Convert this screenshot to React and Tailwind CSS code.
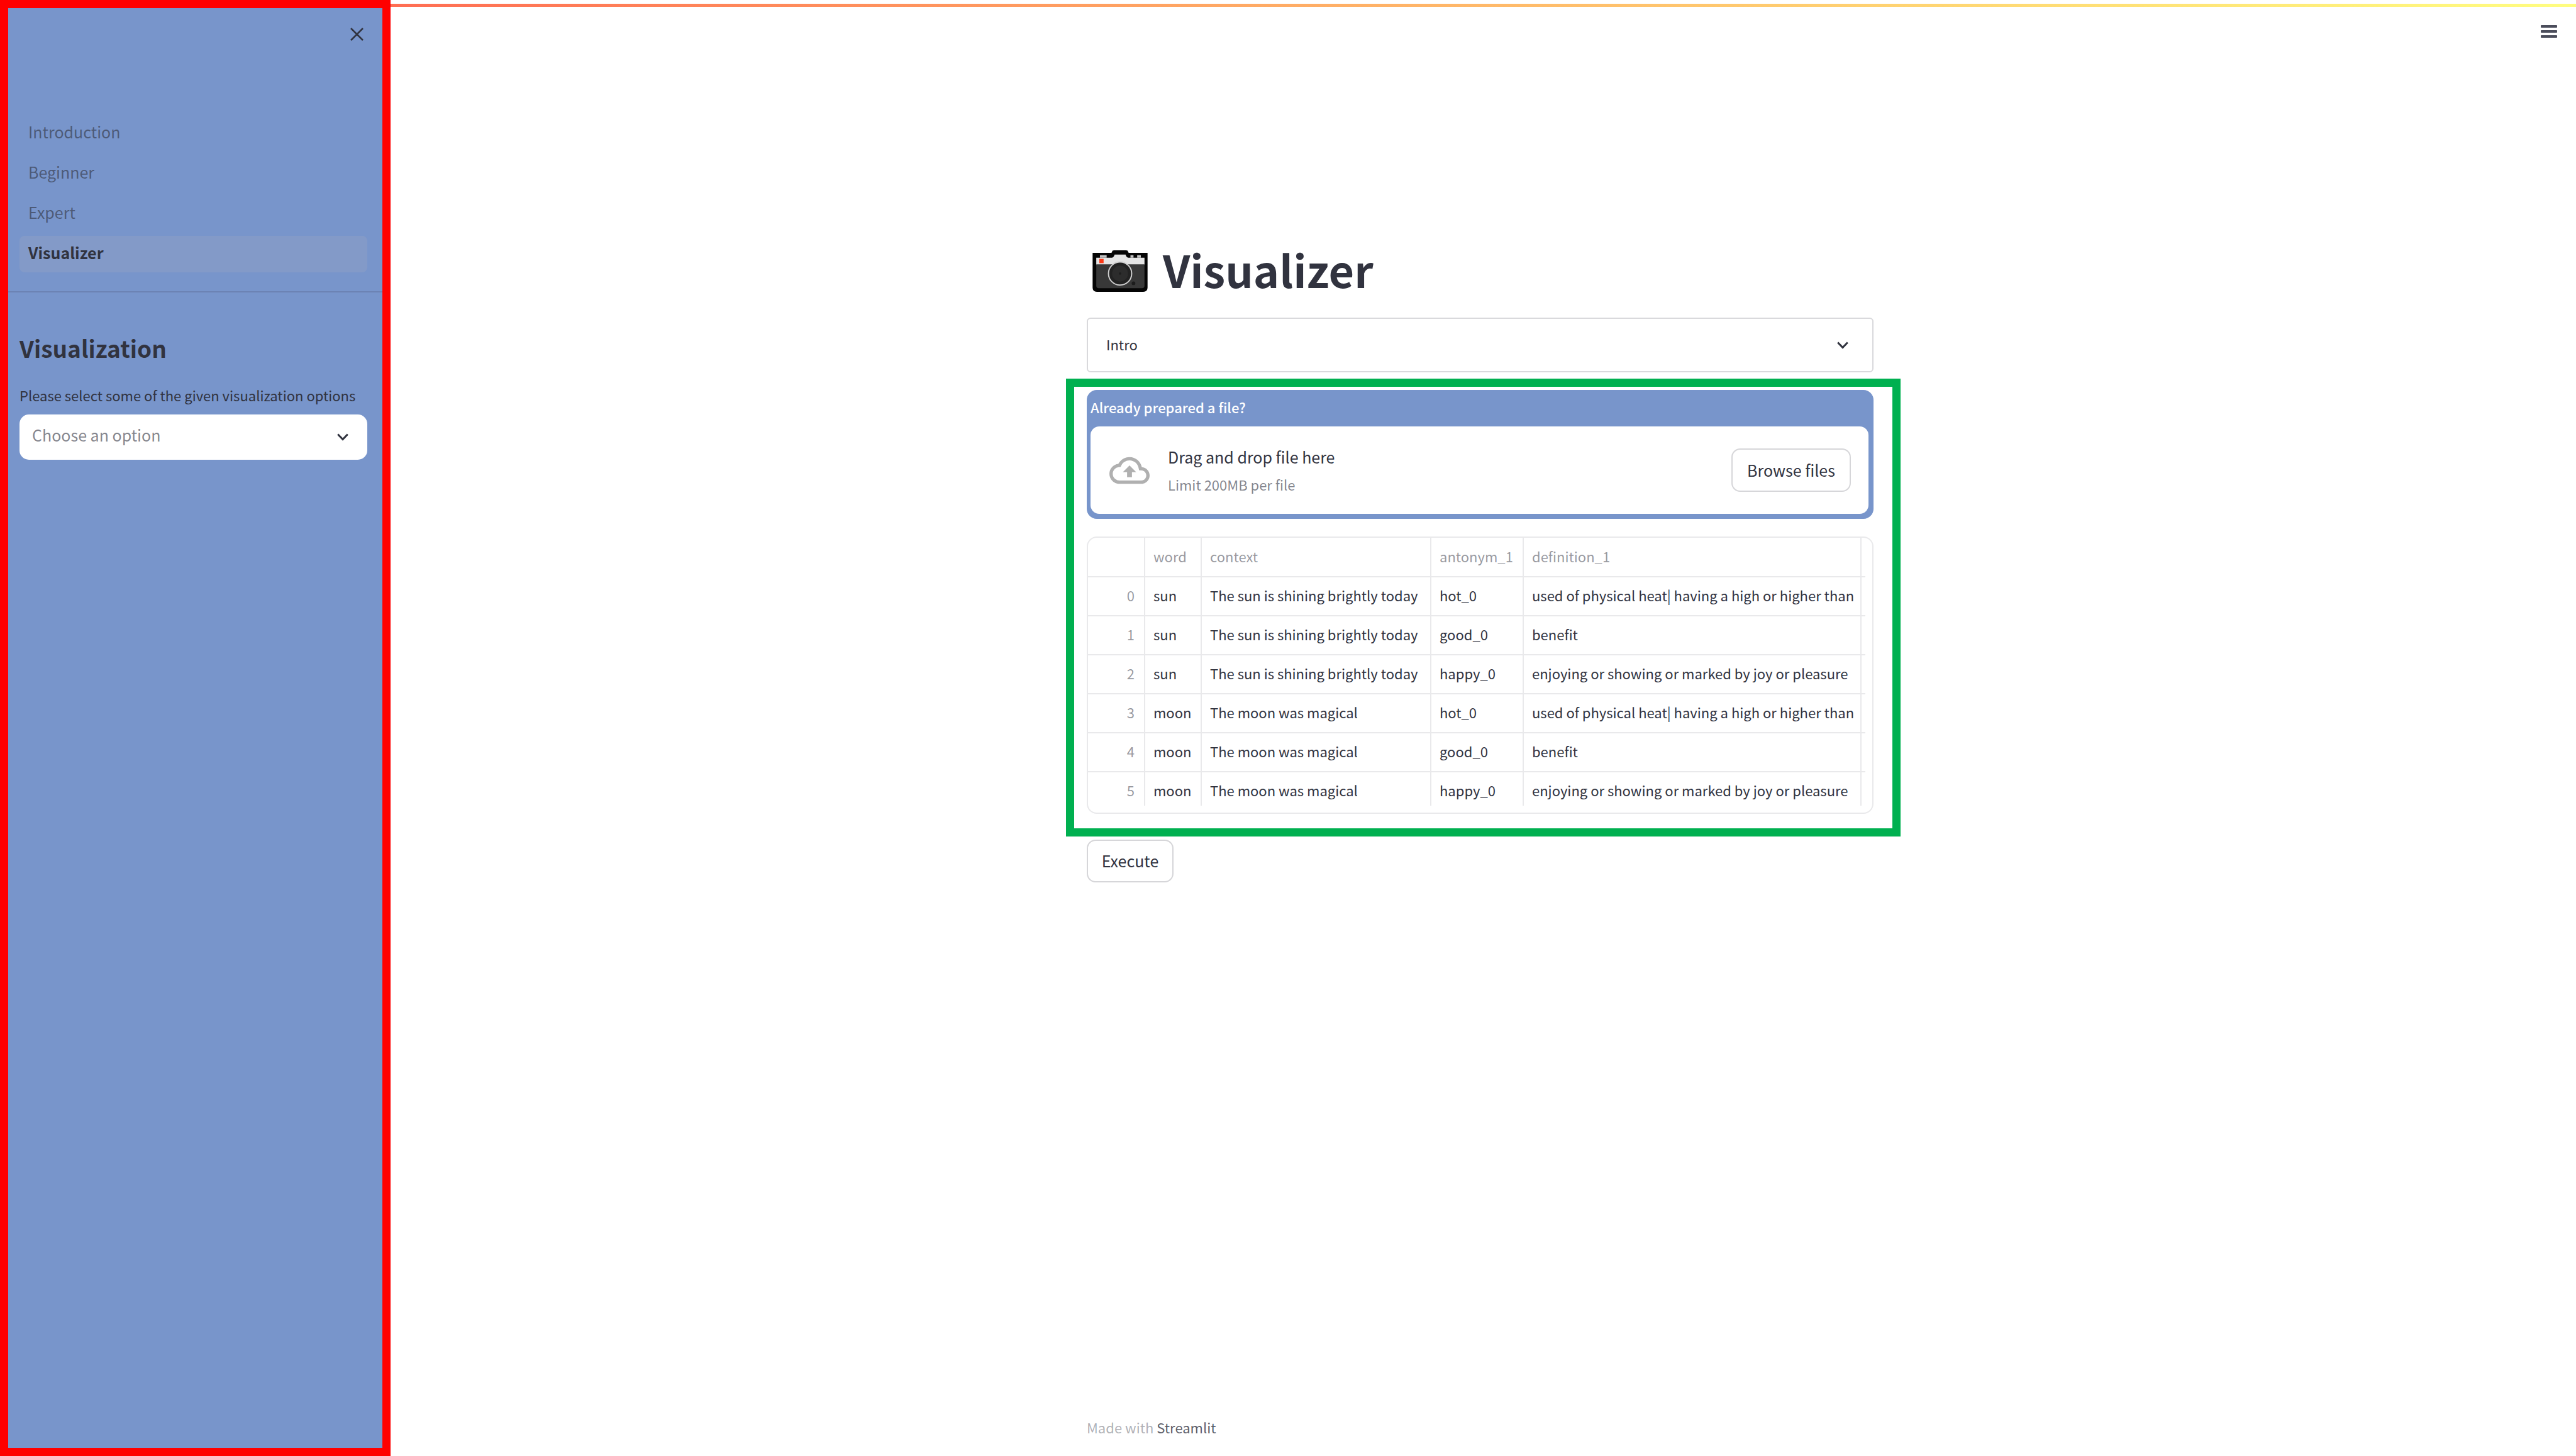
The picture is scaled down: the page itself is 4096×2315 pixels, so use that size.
const ink = "text-[#31333f]";

const links = ["Introduction", "Beginner", "Expert"];

const rows = [
  ["sun", "The sun is shining brightly today", "hot_0", "used of physical heat| having a high or higher than"],
  ["sun", "The sun is shining brightly today", "good_0", "benefit"],
  ["sun", "The sun is shining brightly today", "happy_0", "enjoying or showing or marked by joy or pleasure"],
  ["moon", "The moon was magical", "hot_0", "used of physical heat| having a high or higher than"],
  ["moon", "The moon was magical", "good_0", "benefit"],
  ["moon", "The moon was magical", "happy_0", "enjoying or showing or marked by joy or pleasure"],
];

function Chevron({ className }) {
  return (
    <svg className={className} viewBox="0 0 18 12" fill="none" stroke="currentColor" strokeWidth="3" aria-hidden="true">
      <path d="M1.200 1.500 9 9.500l7.800-8" />
    </svg>
  );
}

function Camera() {
  return (
    <svg className="mt-1.5 ml-[9px] h-[66px] w-[88px] shrink-0" viewBox="0 0 90 68" role="img" aria-label="camera">
      <path d="M0 4h30q2 0 2-2t3-2h20q3 0 3 2t2 2h30v57q0 7-7 7H7q-7 0-7-7z" fill="#050505" />
      <path d="M6 12h26q3-1 4-5h18q1 4 4 5h27v12H6z" fill="#e4e4e4" />
      <path d="M12 8h11v4H12zM62 8h5v4h-5zM73 8h6v4h-6z" fill="#c4c4c4" />
      <path d="M6 23h79v35q0 4-4 4H10q-4 0-4-4z" fill="#383838" />
      <rect x="11" y="14" width="7" height="7" fill="#fb3a17" />
      <circle cx="45" cy="38" r="19" fill="#222" stroke="#cfcfcf" strokeWidth="2" />
      <circle cx="45" cy="38" r="13" fill="#2c2c2c" />
      <circle cx="45" cy="38" r="2" fill="#1e1e1e" />
      <circle cx="67" cy="54" r="3" fill="#1c1c1c" />
    </svg>
  );
}

function Sidebar() {
  return (
    <aside className="flex w-[621px] shrink-0 flex-col border-[13px] border-[#ff0000] bg-[#7895cb]">
      <div className="flex h-[170px] items-start justify-end pt-[31px] pr-[30px]">
        <button type="button" aria-label="Close sidebar">
          <svg className="h-[21px] w-[21px]" viewBox="0 0 21 21" fill="none" stroke="currentColor" strokeWidth="2.500">
            <path d="M1 1l19 19M20 1L1 20" />
          </svg>
        </button>
      </div>
      <nav className="flex flex-col gap-1.5 pr-6 pl-[18px] text-[25px] leading-[32px]">
        {links.map((l) => (
          <a key={l} href="#" className="flex h-[58px] items-center rounded-lg px-3.5 pb-1.5 text-[#31333f]/60">
            {l}
          </a>
        ))}
        <a href="#" aria-current="page" className="flex h-[58px] items-center rounded-lg bg-[#839ac8] px-3.5 pb-1.5 font-bold">
          Visualizer
        </a>
      </nav>
      <hr className="mt-[30px] border-t-2 border-[#6c83b3]" />
      <section className="flex flex-col pr-6 pl-[18px]">
        <h2 className="mt-16 text-[37px] leading-[48px] font-bold">Visualization</h2>
        <label htmlFor="options" className="mt-[35px] text-[22px] leading-[32px] whitespace-nowrap">
          Please select some of the given visualization options
        </label>
        <div className="relative mt-[15px]">
          <select
            id="options"
            defaultValue=""
            className="h-[72px] w-full appearance-none rounded-[15px] bg-white pb-1.5 pl-5 text-[25px] text-[#31333f]/60"
          >
            <option value="">Choose an option</option>
          </select>
          <Chevron className="pointer-events-none absolute top-[30px] right-[30px] h-3 w-[18px]" />
        </div>
      </section>
    </aside>
  );
}

function Uploader() {
  return (
    <section className="flex flex-col rounded-[16px] bg-[#7895cb] pt-[11px] pr-2 pb-2 pl-1.5">
      <p className="text-[22px] leading-[32px] font-medium text-white">Already prepared a file?</p>
      <div className="mt-[15px] flex h-[139px] items-center rounded-[14px] bg-white pr-[28px] pl-[30px]">
        <svg className="h-16 w-16 shrink-0" viewBox="0 0 24 24" fill="#b0b0b0" aria-hidden="true">
          <path d="M19.350 10.040C18.670 6.590 15.640 4 12 4 9.110 4 6.600 5.640 5.350 8.040 2.340 8.360 0 10.910 0 14c0 3.310 2.690 6 6 6h13c2.760 0 5-2.240 5-5 0-2.640-2.050-4.780-4.650-4.960zM19 18H6c-2.210 0-4-1.790-4-4 0-2.050 1.530-3.760 3.560-3.970l1.070-.11.5-.95C8.080 7.140 9.940 6 12 6c2.620 0 4.880 1.860 5.390 4.430l.3 1.500 1.530.11c1.560.1 2.780 1.410 2.780 2.960 0 1.650-1.350 3-3 3zM8 13h2.550v3h2.900v-3H16l-4-4z" />
        </svg>
        <div className="ml-[29px] flex-1">
          <p className="text-[25px] leading-[44px]">Drag and drop file here</p>
          <p className="text-[22px] leading-[44px] text-[#31333f]/60">Limit 200MB per file</p>
        </div>
        <button type="button" className="h-[69px] w-[190px] rounded-[14px] border-2 border-[#d6d6d9] pb-0.5 text-[25px] leading-[32px]">
          Browse files
        </button>
      </div>
    </section>
  );
}

function DataTable() {
  const line = "border-[#e9e9eb]";
  return (
    <div className={`mt-7 h-[441px] overflow-hidden rounded-[16px] border-2 ${line} pr-[11px] pb-[11px]`}>
      <div className="h-full overflow-hidden">
        <table className="w-full table-fixed border-separate border-spacing-0 text-left text-[22px] leading-[32px] whitespace-nowrap">
          <colgroup>
            <col className="w-[91px]" />
            <col className="w-[90px]" />
            <col className="w-[365px]" />
            <col className="w-[147px]" />
            <col />
            <col className="w-[6px]" />
          </colgroup>
          <thead>
            <tr className="h-[63px] text-[#31333f]/50">
              <th className={`border-r-2 border-b-2 ${line}`} />
              {["word", "context", "antonym_1", "definition_1"].map((h) => (
                <th key={h} className={`border-r-2 border-b-2 ${line} pb-1 pl-[13px] font-normal`}>{h}</th>
              ))}
              <th className={`border-b-2 ${line}`} />
            </tr>
          </thead>
          <tbody>
            {rows.map((r, i) => (
              <tr key={i} className="h-[62px]">
                <th className={`border-r-2 border-b-2 ${line} pr-[15px] pb-1 text-right font-normal text-[#31333f]/50`}>{i}</th>
                {r.map((c, j) => (
                  <td key={j} className={`border-r-2 border-b-2 ${line} pb-1 pl-[13px]`}>{c}</td>
                ))}
                <td className={`border-b-2 ${line}`} />
              </tr>
            ))}
          </tbody>
        </table>
      </div>
    </div>
  );
}

export default function App() {
  return (
    <div className={`relative flex min-h-screen bg-white font-['Noto_Sans_CJK_JP','Noto_Sans',sans-serif] ${ink}`}>
      <div className="absolute inset-x-0 top-1.5 h-[5px] bg-linear-to-r from-[#ff4b4b] to-[#fffd80]" />
      <div className="relative flex flex-1">
        <Sidebar />
        <div className="flex min-w-0 flex-1 flex-col">
          <header className="flex h-[100px] items-start justify-end pt-10 pr-[30px]">
            <button type="button" aria-label="Main menu">
              <svg className="h-5 w-[26px]" viewBox="0 0 26 20" fill="#4b4d5b">
                <rect width="26" height="4" rx="1" />
                <rect y="8" width="26" height="4" rx="1" />
                <rect y="16" width="26" height="4" rx="1" />
              </svg>
            </button>
          </header>
          <div className="flex flex-1 justify-center pr-[10px]">
            <div className="flex w-full max-w-[1251px] flex-col">
              <main className="flex flex-1 flex-col">
                <h1 className="mt-[283px] flex items-center gap-6 text-[70px] leading-[90px] font-bold">
                  <Camera />
                  Visualizer
                </h1>
                <button
                  type="button"
                  aria-expanded="false"
                  className="mt-8 flex h-[87px] items-center justify-between rounded-md border-2 border-[#d9d9dc] pr-[38px] pl-[29px] text-[22px] leading-[32px]"
                >
                  <span className="pb-1">Intro</span>
                  <Chevron className="h-3 w-[18px]" />
                </button>
                <div className="mt-2.5 -mr-[43px] -ml-[33px] border-[13px] border-[#00b050] pt-[5px] pr-[30px] pb-[23px] pl-5">
                  <Uploader />
                  <DataTable />
                </div>
                <button type="button" className="mt-[5px] h-[68px] w-[138px] rounded-[14px] border-2 border-[#d6d6d9] pb-0.5 text-[25px] leading-[32px]">
                  Execute
                </button>
              </main>
              <footer className="pb-[28px] text-[22px] leading-[36px] text-[#31333f]/40">
                Made with <a href="#" className="text-[#31333f]/80">Streamlit</a>
              </footer>
            </div>
          </div>
        </div>
      </div>
    </div>
  );
}
